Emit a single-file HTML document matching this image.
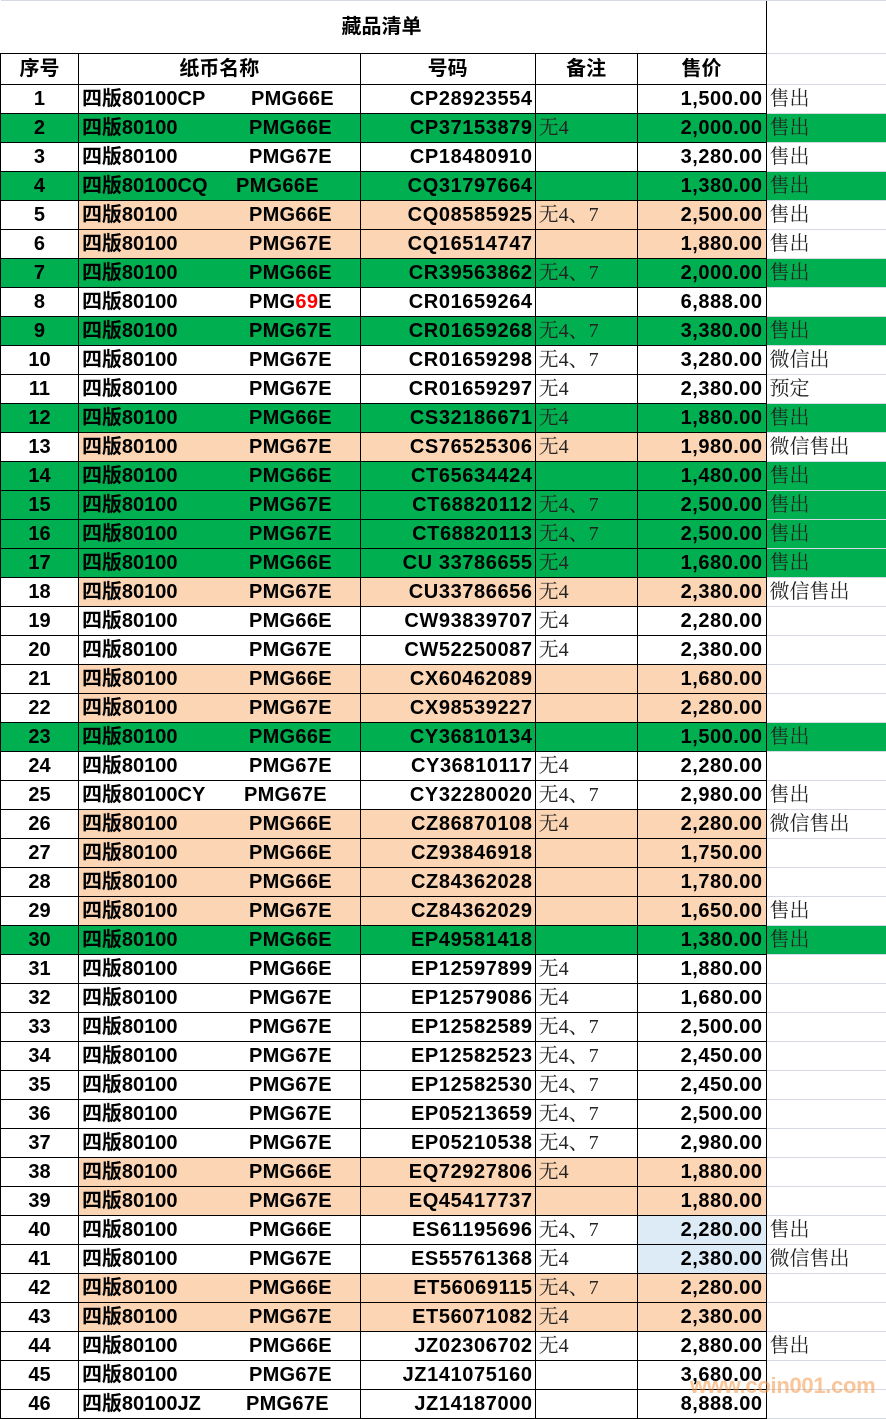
<!DOCTYPE html>
<html><head><meta charset="utf-8"><style>
body{margin:0;background:#fff;width:886px;height:1418px;overflow:hidden;position:relative}
table{border-collapse:collapse;table-layout:fixed;position:absolute;left:0;top:0;font-family:"Liberation Sans","Noto Sans CJK SC",sans-serif;font-weight:bold;font-size:20px;color:#000}
td{border:1px solid #000;padding:0 3px;height:28px;line-height:28px;white-space:nowrap;overflow:hidden}
td.a{text-align:center}
td.b{position:relative}
td.b span{position:absolute;top:0;letter-spacing:0.3px}
td.c{text-align:right;padding-right:2px;letter-spacing:0.6px}
td.d,td.f{font-family:"Liberation Serif","Noto Serif CJK SC",serif;font-weight:normal;font-size:20px;color:#222}
td.e{text-align:right;padding-right:3px;letter-spacing:0.5px}
td.f{border:1px solid #d4d9e3;border-left:1px solid #000;border-right:none}
tr.g td{background:#00b050}
tr.p td.b,tr.p td.c,tr.p td.d,tr.p td.e{background:#fcd5b4}
td.lb{background:#ddebf7}
tr.t td{height:52px;border:none;border-bottom:1px solid #000;font-size:20px;text-align:center}
tr.t td.f{border-bottom:1px solid #d4d9e3;border-left:1px solid #000}
tr.h td{height:30px;text-align:center;font-size:20px}
.r{color:#f00}
.wm{position:absolute;left:690px;top:1373px;font:bold 22px "Liberation Sans",sans-serif;color:rgba(244,150,70,0.55);letter-spacing:-0.3px}
</style></head><body>
<table>
<colgroup><col style="width:78px"><col style="width:282px"><col style="width:175px"><col style="width:102px"><col style="width:129px"><col style="width:120px"></colgroup>
<tr class="t"><td colspan="5" style="border-top:1px solid #d4d9e3;padding-left:0">藏品清单</td><td class="f" style="border-top:1px solid #d4d9e3"></td></tr>
<tr class="h"><td>序号</td><td>纸币名称</td><td>号码</td><td>备注</td><td>售价</td><td class="f"></td></tr>
<tr><td class="a">1</td><td class="b">四版80100CP<span style="left:172px">PMG66E</span></td><td class="c">CP28923554</td><td class="d"></td><td class="e">1,500.00</td><td class="f">售出</td></tr>
<tr class="g"><td class="a">2</td><td class="b">四版80100<span style="left:170px">PMG66E</span></td><td class="c">CP37153879</td><td class="d">无4</td><td class="e">2,000.00</td><td class="f">售出</td></tr>
<tr><td class="a">3</td><td class="b">四版80100<span style="left:170px">PMG67E</span></td><td class="c">CP18480910</td><td class="d"></td><td class="e">3,280.00</td><td class="f">售出</td></tr>
<tr class="g"><td class="a">4</td><td class="b">四版80100CQ<span style="left:157px">PMG66E</span></td><td class="c">CQ31797664</td><td class="d"></td><td class="e">1,380.00</td><td class="f">售出</td></tr>
<tr class="p"><td class="a">5</td><td class="b">四版80100<span style="left:170px">PMG66E</span></td><td class="c">CQ08585925</td><td class="d">无4、7</td><td class="e">2,500.00</td><td class="f">售出</td></tr>
<tr class="p"><td class="a">6</td><td class="b">四版80100<span style="left:170px">PMG67E</span></td><td class="c">CQ16514747</td><td class="d"></td><td class="e">1,880.00</td><td class="f">售出</td></tr>
<tr class="g"><td class="a">7</td><td class="b">四版80100<span style="left:170px">PMG66E</span></td><td class="c">CR39563862</td><td class="d">无4、7</td><td class="e">2,000.00</td><td class="f">售出</td></tr>
<tr><td class="a">8</td><td class="b">四版80100<span style="left:170px">PMG<b class="r">69</b>E</span></td><td class="c">CR01659264</td><td class="d"></td><td class="e">6,888.00</td><td class="f"></td></tr>
<tr class="g"><td class="a">9</td><td class="b">四版80100<span style="left:170px">PMG67E</span></td><td class="c">CR01659268</td><td class="d">无4、7</td><td class="e">3,380.00</td><td class="f">售出</td></tr>
<tr><td class="a">10</td><td class="b">四版80100<span style="left:170px">PMG67E</span></td><td class="c">CR01659298</td><td class="d">无4、7</td><td class="e">3,280.00</td><td class="f">微信出</td></tr>
<tr><td class="a">11</td><td class="b">四版80100<span style="left:170px">PMG67E</span></td><td class="c">CR01659297</td><td class="d">无4</td><td class="e">2,380.00</td><td class="f">预定</td></tr>
<tr class="g"><td class="a">12</td><td class="b">四版80100<span style="left:170px">PMG66E</span></td><td class="c">CS32186671</td><td class="d">无4</td><td class="e">1,880.00</td><td class="f">售出</td></tr>
<tr class="p"><td class="a">13</td><td class="b">四版80100<span style="left:170px">PMG67E</span></td><td class="c">CS76525306</td><td class="d">无4</td><td class="e">1,980.00</td><td class="f">微信售出</td></tr>
<tr class="g"><td class="a">14</td><td class="b">四版80100<span style="left:170px">PMG66E</span></td><td class="c">CT65634424</td><td class="d"></td><td class="e">1,480.00</td><td class="f">售出</td></tr>
<tr class="g"><td class="a">15</td><td class="b">四版80100<span style="left:170px">PMG67E</span></td><td class="c">CT68820112</td><td class="d">无4、7</td><td class="e">2,500.00</td><td class="f">售出</td></tr>
<tr class="g"><td class="a">16</td><td class="b">四版80100<span style="left:170px">PMG67E</span></td><td class="c">CT68820113</td><td class="d">无4、7</td><td class="e">2,500.00</td><td class="f">售出</td></tr>
<tr class="g"><td class="a">17</td><td class="b">四版80100<span style="left:170px">PMG66E</span></td><td class="c">CU 33786655</td><td class="d">无4</td><td class="e">1,680.00</td><td class="f">售出</td></tr>
<tr class="p"><td class="a">18</td><td class="b">四版80100<span style="left:170px">PMG67E</span></td><td class="c">CU33786656</td><td class="d">无4</td><td class="e">2,380.00</td><td class="f">微信售出</td></tr>
<tr><td class="a">19</td><td class="b">四版80100<span style="left:170px">PMG66E</span></td><td class="c">CW93839707</td><td class="d">无4</td><td class="e">2,280.00</td><td class="f"></td></tr>
<tr><td class="a">20</td><td class="b">四版80100<span style="left:170px">PMG67E</span></td><td class="c">CW52250087</td><td class="d">无4</td><td class="e">2,380.00</td><td class="f"></td></tr>
<tr class="p"><td class="a">21</td><td class="b">四版80100<span style="left:170px">PMG66E</span></td><td class="c">CX60462089</td><td class="d"></td><td class="e">1,680.00</td><td class="f"></td></tr>
<tr class="p"><td class="a">22</td><td class="b">四版80100<span style="left:170px">PMG67E</span></td><td class="c">CX98539227</td><td class="d"></td><td class="e">2,280.00</td><td class="f"></td></tr>
<tr class="g"><td class="a">23</td><td class="b">四版80100<span style="left:170px">PMG66E</span></td><td class="c">CY36810134</td><td class="d"></td><td class="e">1,500.00</td><td class="f">售出</td></tr>
<tr><td class="a">24</td><td class="b">四版80100<span style="left:170px">PMG67E</span></td><td class="c">CY36810117</td><td class="d">无4</td><td class="e">2,280.00</td><td class="f"></td></tr>
<tr><td class="a">25</td><td class="b">四版80100CY<span style="left:165px">PMG67E</span></td><td class="c">CY32280020</td><td class="d">无4、7</td><td class="e">2,980.00</td><td class="f">售出</td></tr>
<tr class="p"><td class="a">26</td><td class="b">四版80100<span style="left:170px">PMG66E</span></td><td class="c">CZ86870108</td><td class="d">无4</td><td class="e">2,280.00</td><td class="f">微信售出</td></tr>
<tr class="p"><td class="a">27</td><td class="b">四版80100<span style="left:170px">PMG66E</span></td><td class="c">CZ93846918</td><td class="d"></td><td class="e">1,750.00</td><td class="f"></td></tr>
<tr class="p"><td class="a">28</td><td class="b">四版80100<span style="left:170px">PMG66E</span></td><td class="c">CZ84362028</td><td class="d"></td><td class="e">1,780.00</td><td class="f"></td></tr>
<tr class="p"><td class="a">29</td><td class="b">四版80100<span style="left:170px">PMG67E</span></td><td class="c">CZ84362029</td><td class="d"></td><td class="e">1,650.00</td><td class="f">售出</td></tr>
<tr class="g"><td class="a">30</td><td class="b">四版80100<span style="left:170px">PMG66E</span></td><td class="c">EP49581418</td><td class="d"></td><td class="e">1,380.00</td><td class="f">售出</td></tr>
<tr><td class="a">31</td><td class="b">四版80100<span style="left:170px">PMG66E</span></td><td class="c">EP12597899</td><td class="d">无4</td><td class="e">1,880.00</td><td class="f"></td></tr>
<tr><td class="a">32</td><td class="b">四版80100<span style="left:170px">PMG67E</span></td><td class="c">EP12579086</td><td class="d">无4</td><td class="e">1,680.00</td><td class="f"></td></tr>
<tr><td class="a">33</td><td class="b">四版80100<span style="left:170px">PMG67E</span></td><td class="c">EP12582589</td><td class="d">无4、7</td><td class="e">2,500.00</td><td class="f"></td></tr>
<tr><td class="a">34</td><td class="b">四版80100<span style="left:170px">PMG67E</span></td><td class="c">EP12582523</td><td class="d">无4、7</td><td class="e">2,450.00</td><td class="f"></td></tr>
<tr><td class="a">35</td><td class="b">四版80100<span style="left:170px">PMG67E</span></td><td class="c">EP12582530</td><td class="d">无4、7</td><td class="e">2,450.00</td><td class="f"></td></tr>
<tr><td class="a">36</td><td class="b">四版80100<span style="left:170px">PMG67E</span></td><td class="c">EP05213659</td><td class="d">无4、7</td><td class="e">2,500.00</td><td class="f"></td></tr>
<tr><td class="a">37</td><td class="b">四版80100<span style="left:170px">PMG67E</span></td><td class="c">EP05210538</td><td class="d">无4、7</td><td class="e">2,980.00</td><td class="f"></td></tr>
<tr class="p"><td class="a">38</td><td class="b">四版80100<span style="left:170px">PMG66E</span></td><td class="c">EQ72927806</td><td class="d">无4</td><td class="e">1,880.00</td><td class="f"></td></tr>
<tr class="p"><td class="a">39</td><td class="b">四版80100<span style="left:170px">PMG67E</span></td><td class="c">EQ45417737</td><td class="d"></td><td class="e">1,880.00</td><td class="f"></td></tr>
<tr><td class="a">40</td><td class="b">四版80100<span style="left:170px">PMG66E</span></td><td class="c">ES61195696</td><td class="d">无4、7</td><td class="e lb">2,280.00</td><td class="f">售出</td></tr>
<tr><td class="a">41</td><td class="b">四版80100<span style="left:170px">PMG67E</span></td><td class="c">ES55761368</td><td class="d">无4</td><td class="e lb">2,380.00</td><td class="f">微信售出</td></tr>
<tr class="p"><td class="a">42</td><td class="b">四版80100<span style="left:170px">PMG66E</span></td><td class="c">ET56069115</td><td class="d">无4、7</td><td class="e">2,280.00</td><td class="f"></td></tr>
<tr class="p"><td class="a">43</td><td class="b">四版80100<span style="left:170px">PMG67E</span></td><td class="c">ET56071082</td><td class="d">无4</td><td class="e">2,380.00</td><td class="f"></td></tr>
<tr><td class="a">44</td><td class="b">四版80100<span style="left:170px">PMG66E</span></td><td class="c">JZ02306702</td><td class="d">无4</td><td class="e">2,880.00</td><td class="f">售出</td></tr>
<tr><td class="a">45</td><td class="b">四版80100<span style="left:170px">PMG67E</span></td><td class="c">JZ141075160</td><td class="d"></td><td class="e">3,680.00</td><td class="f"></td></tr>
<tr><td class="a">46</td><td class="b">四版80100JZ<span style="left:167px">PMG67E</span></td><td class="c">JZ14187000</td><td class="d"></td><td class="e">8,888.00</td><td class="f"></td></tr>
</table>
<div class="wm">www.coin001.com</div>
</body></html>
